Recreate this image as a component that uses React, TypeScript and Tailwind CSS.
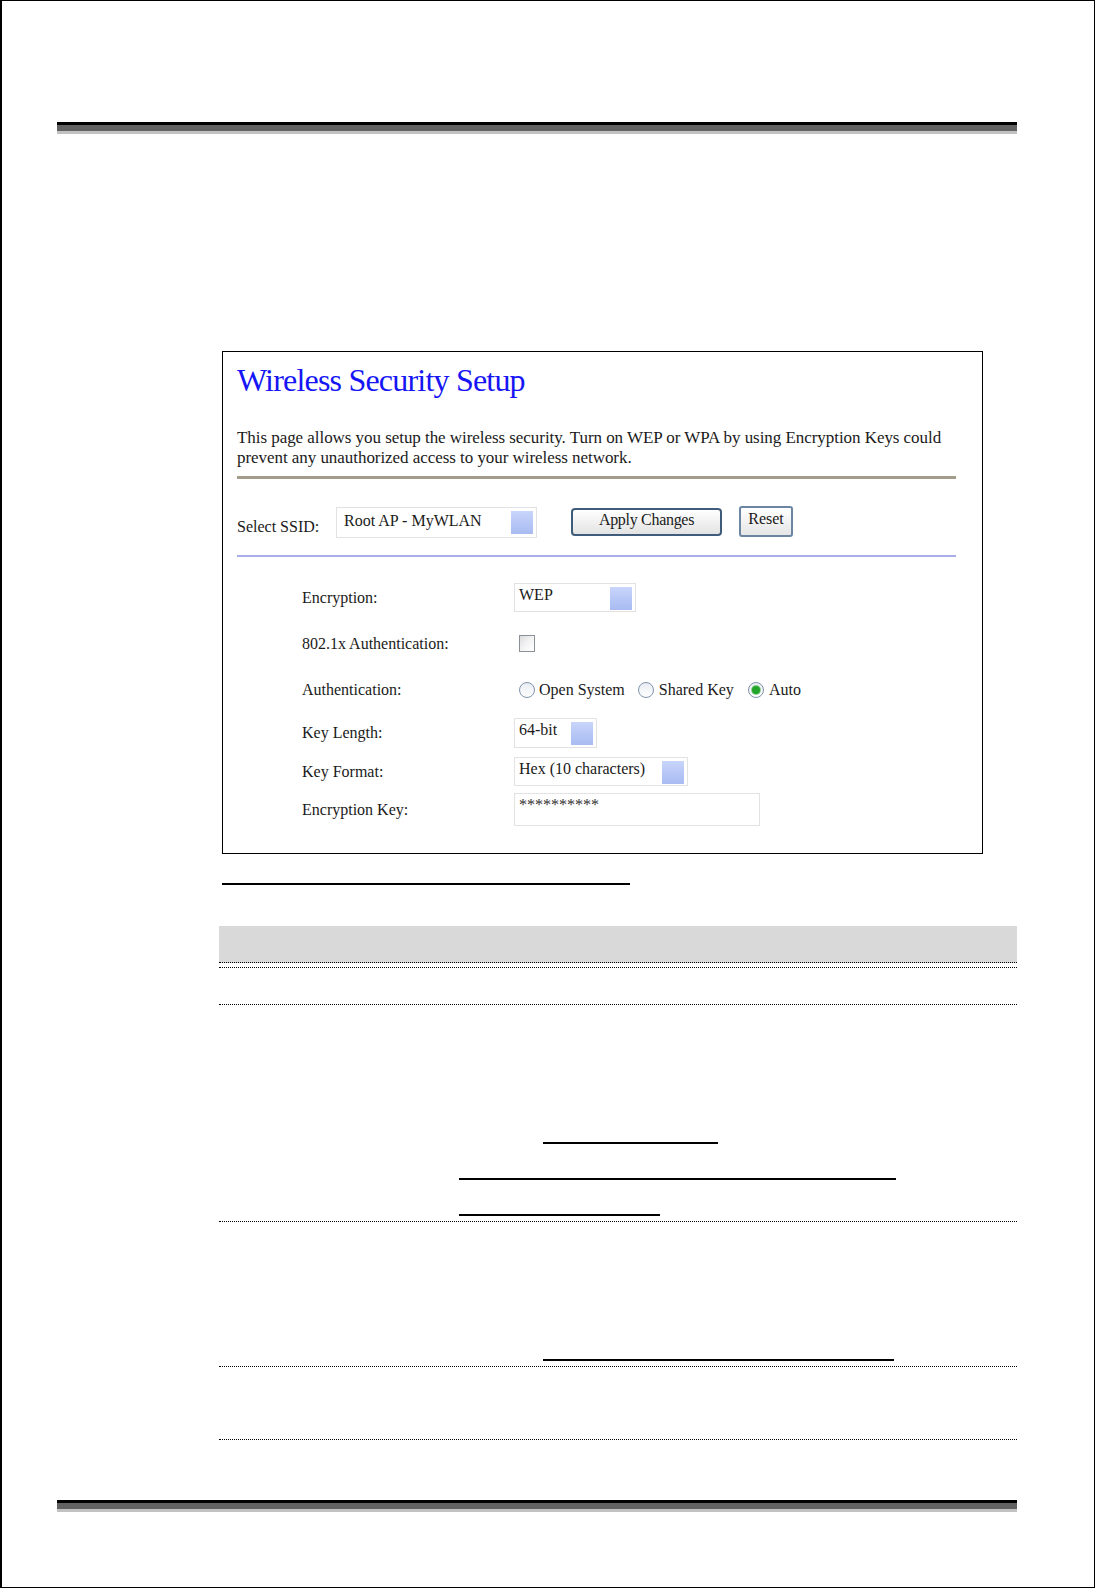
import type { ReactNode } from "react";

// thick three-tone rule used at top and bottom of the manual page
function PageRule() {
  return (
    <div className="w-[960px]">
      <div className="h-[3px] bg-black" />
      <div className="h-[6px] bg-[#626262]" />
      <div className="h-[3px] bg-[#c2c2c2]" />
    </div>
  );
}

function DropSquare({ className = "" }: { className?: string }) {
  return (
    <span
      className={
        "absolute w-[22px] h-[23px] bg-linear-to-b from-[#c9d5fb] via-[#b7c7f6] to-[#a9bbf2] " +
        className
      }
    />
  );
}

function FakeSelect({
  children,
  className,
}: {
  children: ReactNode;
  className: string;
}) {
  return (
    <div
      className={
        "relative bg-white border border-[#e2e2e2] pl-[4px] text-[16px] leading-[22px] text-[#1a1a1a] whitespace-nowrap " +
        className
      }
    >
      {children}
      <DropSquare className="right-[3px] top-[3px]" />
    </div>
  );
}

function Radio({ checked = false }: { checked?: boolean }) {
  return (
    <span className="w-[16px] h-[16px] rounded-full border border-[#7f93ac] bg-linear-to-b from-[#e9edf2] to-white flex items-center justify-center">
      {checked && (
        <span className="w-[8px] h-[8px] rounded-full bg-[#22a52a] shadow-[0_0_0_1px_#8fd18f]" />
      )}
    </span>
  );
}

function FormRow({
  label,
  children,
  className,
}: {
  label: string;
  children: ReactNode;
  className: string;
}) {
  return (
    <div className={"flex items-center " + className}>
      <div className="w-[212px] text-[16px] leading-[20px] text-[#1a1a1a] whitespace-nowrap">
        {label}
      </div>
      {children}
    </div>
  );
}

function Underline({ className }: { className: string }) {
  return <div className={"h-[2px] bg-black " + className} />;
}

export default function App() {
  return (
    <div className="w-[1095px] h-[1588px] border border-l-2 border-black bg-white flex flex-col">
      <div className="ml-[55px] mt-[121px] w-[960px] flex flex-col">
        <PageRule />

        {/* Screenshot of the router page */}
        <div className="ml-[165px] mt-[217px] w-[761px] h-[503px] border border-black pl-[14px] pr-[26px] font-['Liberation_Serif','Times_New_Roman',serif]">
          <h1 className="mt-[10px] text-[32px] leading-[36px] tracking-[-0.8px] text-[#1515f5] whitespace-nowrap">
            Wireless Security Setup
          </h1>
          <p className="mt-[30px] text-[17px] leading-[20px] text-[#1a1a1a] whitespace-nowrap tracking-[-0.05px]">
            This page allows you setup the wireless security. Turn on WEP or WPA by using Encryption Keys could
            <br />
            prevent any unauthorized access to your wireless network.
          </p>
          <div className="mt-[8px] h-[3px] bg-[#a29d8b]" />

          <div className="mt-[27px] h-[31px] flex items-start">
            <div className="w-[99px] mt-[11px] text-[16px] leading-[20px] text-[#1a1a1a] whitespace-nowrap">
              Select SSID:
            </div>
            <FakeSelect className="mt-[1px] w-[201px] h-[31px] pl-[7px] pt-[2px]">
              Root AP - MyWLAN
            </FakeSelect>
            <button className="ml-[34px] mt-[2px] w-[151px] h-[28px] rounded-[4px] border-2 border-[#3f5c7a] bg-linear-to-b from-white to-[#e3e3e3] text-[16px] leading-[20px] pb-[4px] text-[#1a1a1a] tracking-[-0.3px]">
              Apply Changes
            </button>
            <button className="ml-[17px] w-[54px] h-[31px] rounded-[3px] border-2 border-[#6a86a2] bg-linear-to-b from-white to-[#e6e6e6] text-[16px] leading-[20px] pb-[5px] text-[#1a1a1a]">
              Reset
            </button>
          </div>
          <div className="mt-[18px] h-[2px] bg-[#a8aee8]" />

          <div className="pl-[65px]">
            <FormRow label="Encryption:" className="mt-[26px] h-[29px]">
              <FakeSelect className="w-[122px] h-[29px]">WEP</FakeSelect>
            </FormRow>
            <FormRow label="802.1x Authentication:" className="mt-[23px] h-[17px]">
              <span className="ml-[5px] w-[16px] h-[17px] border border-[#8b8f96] bg-linear-to-br from-[#dcdde0] via-[#f3f3f4] to-white" />
            </FormRow>
            <FormRow label="Authentication:" className="mt-[28px] h-[20px]">
              <div className="flex items-center text-[16px] leading-[20px] text-[#1a1a1a] whitespace-nowrap">
                <span className="ml-[5px]"><Radio /></span>
                <span className="ml-[4px]">Open System</span>
                <span className="ml-[13px]"><Radio /></span>
                <span className="ml-[5px]">Shared Key</span>
                <span className="ml-[14px]"><Radio checked /></span>
                <span className="ml-[5px]">Auto</span>
              </div>
            </FormRow>
            <FormRow label="Key Length:" className="mt-[18px] h-[30px]">
              <FakeSelect className="w-[83px] h-[30px]">64-bit</FakeSelect>
            </FormRow>
            <FormRow label="Key Format:" className="mt-[9px] h-[29px]">
              <FakeSelect className="w-[174px] h-[29px]">Hex (10 characters)</FakeSelect>
            </FormRow>
            <FormRow label="Encryption Key:" className="mt-[7px] h-[33px]">
              <div className="w-[246px] h-[33px] border border-[#e2e2e2] pl-[4px] text-[16px] leading-[22px] text-[#333]">
                **********
              </div>
            </FormRow>
          </div>
        </div>

        {/* figure caption underline */}
        <Underline className="ml-[165px] mt-[29px] w-[408px]" />

        {/* description table */}
        <div className="ml-[162px] mt-[41px] w-[798px]">
          <div className="h-[37px] bg-[#d9d9d9] border-b border-dotted border-black" />
          <div className="mt-[4px] h-[38px] border-y border-dotted border-black" />
          <div className="h-[217px] border-b border-dotted border-black pl-[240px] flex flex-col">
            <Underline className="ml-[84px] mt-[137px] w-[175px]" />
            <Underline className="mt-[34px] w-[437px]" />
            <Underline className="mt-[34px] w-[201px]" />
          </div>
          <div className="h-[145px] border-b border-dotted border-black pl-[324px] flex flex-col">
            <Underline className="mt-[137px] w-[351px]" />
          </div>
          <div className="h-[73px] border-b border-dotted border-black" />
        </div>

        <div className="mt-[60px]">
          <PageRule />
        </div>
      </div>
    </div>
  );
}
